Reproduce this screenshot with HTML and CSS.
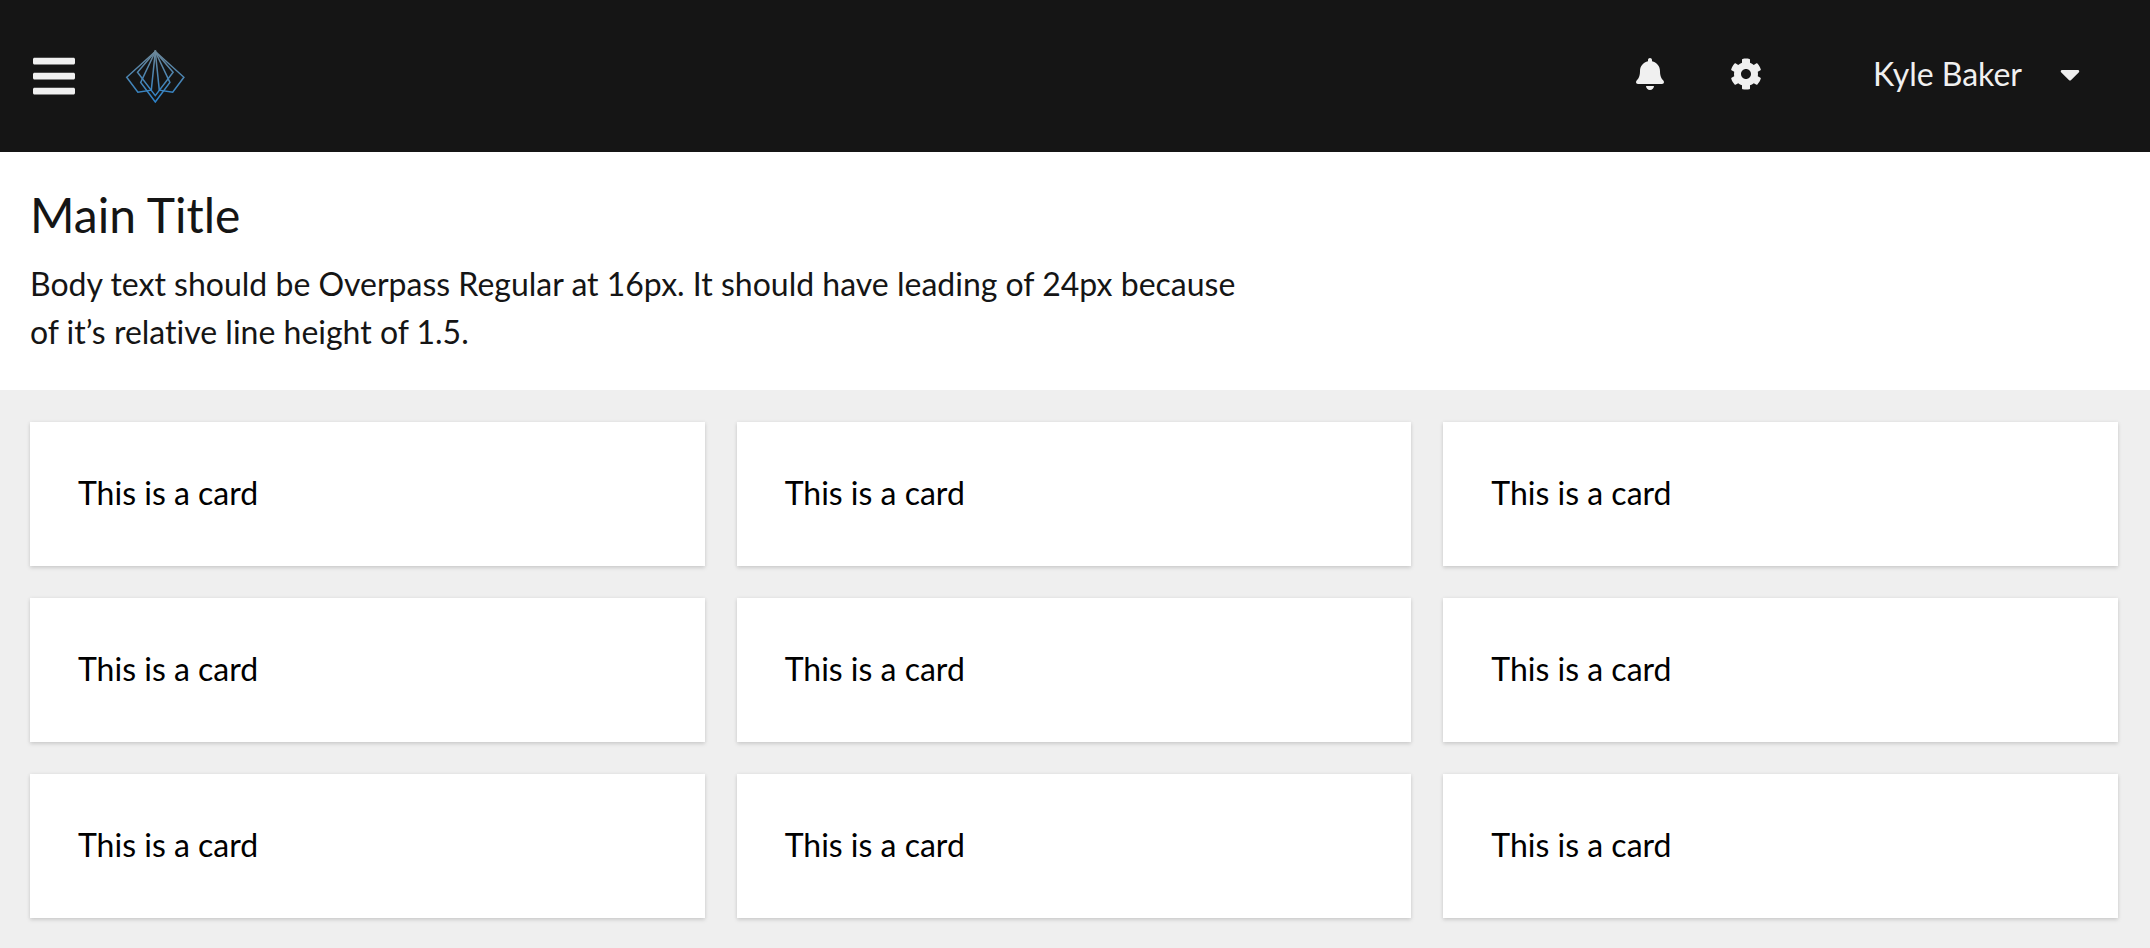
FILE: index.html
```html
<!DOCTYPE html>
<html lang="en">
<head>
<meta charset="utf-8">
<meta name="viewport" content="width=device-width, initial-scale=1">
<title>Main Title</title>
<link rel="stylesheet" href="styles.css">
</head>
<body>
<div class="page">
  <header class="masthead">
    <div class="brand">
      <button class="icon-button" type="button" aria-label="Global navigation">
        <svg class="icon-bars" viewBox="0 0 448 512" aria-hidden="true"><path d="M16 132h416c8.837 0 16-7.163 16-16V76c0-8.837-7.163-16-16-16H16C7.163 60 0 67.163 0 76v40c0 8.837 7.163 16 16 16zm0 160h416c8.837 0 16-7.163 16-16v-40c0-8.837-7.163-16-16-16H16c-8.837 0-16 7.163-16 16v40c0 8.837 7.163 16 16 16zm0 160h416c8.837 0 16-7.163 16-16v-40c0-8.837-7.163-16-16-16H16c-8.837 0-16 7.163-16 16v40c0 8.837 7.163 16 16 16z"/></svg>
      </button>
      <a class="logo-link" href="#" aria-label="Home">
        <svg class="logo" viewBox="0 0 60 54" aria-hidden="true">
          <defs>
            <linearGradient id="logo-stroke" gradientUnits="userSpaceOnUse" x1="0" y1="0" x2="0" y2="54">
              <stop offset="0" stop-color="#6f8796"/>
              <stop offset="1" stop-color="#2b83cc"/>
            </linearGradient>
          </defs>
          <g class="logo-lines" stroke="url(#logo-stroke)">
            <path d="M30.3 2.5 1.7 28.3 12.9 43.3 26.3 41.2z"/>
            <path d="M30.3 2.5 58.9 28.3 47.7 43.3 34.3 41.2z"/>
            <path d="M30.3 2.5 12.5 23.2 30.3 46.6 48.1 23.2z"/>
            <path d="M30.3 2.5 15.7 33.4 30.3 53 44.9 33.4z"/>
          </g>
        </svg>
      </a>
    </div>
    <div class="tools">
      <button class="icon-button" type="button" aria-label="Notifications">
        <svg class="icon-bell" viewBox="0 0 448 512" aria-hidden="true"><path d="M224 512c35.32 0 63.97-28.65 63.97-64H160.03c0 35.35 28.65 64 63.97 64zm215.39-149.71c-19.32-20.76-55.47-51.99-55.47-154.29 0-77.7-54.48-139.9-127.94-155.16V32c0-17.67-14.32-32-31.98-32s-31.98 14.32-31.98 32v20.84C118.56 68.1 64.08 130.3 64.08 208c0 102.3-36.15 133.53-55.47 154.29-6 6.45-8.66 14.16-8.61 21.71.11 16.4 12.98 32 32.1 32h383.8c19.12 0 32-15.6 32.1-32 .05-7.55-2.61-15.27-8.61-21.71z"/></svg>
      </button>
      <button class="icon-button" type="button" aria-label="Settings">
        <svg class="icon-cog" viewBox="0 0 512 512" aria-hidden="true"><path d="M487.4 315.7l-42.6-24.6c4.3-23.2 4.3-47 0-70.2l42.6-24.6c4.9-2.8 7.1-8.6 5.5-14-11.1-35.6-30-67.8-54.7-94.6-3.8-4.1-10-5.1-14.8-2.3L380.8 110c-17.9-15.4-38.5-27.3-60.8-35.1V25.8c0-5.6-3.9-10.5-9.4-11.7-36.7-8.2-74.3-7.8-109.2 0-5.5 1.2-9.4 6.1-9.4 11.7V75c-22.2 7.9-42.8 19.8-60.8 35.1L88.7 85.5c-4.9-2.8-11-1.9-14.8 2.3-24.7 26.7-43.6 58.9-54.7 94.6-1.7 5.4.6 11.2 5.5 14L67.3 221c-4.3 23.2-4.3 47 0 70.2l-42.6 24.6c-4.9 2.8-7.1 8.6-5.5 14 11.1 35.6 30 67.8 54.7 94.6 3.8 4.1 10 5.1 14.8 2.3l42.6-24.6c17.9 15.4 38.5 27.3 60.8 35.1v49.2c0 5.6 3.9 10.5 9.4 11.7 36.7 8.2 74.3 7.8 109.2 0 5.5-1.2 9.4-6.1 9.4-11.7v-49.2c22.2-7.9 42.8-19.8 60.8-35.1l42.6 24.6c4.9 2.8 11 1.9 14.8-2.3 24.7-26.7 43.6-58.9 54.7-94.6 1.5-5.5-.7-11.3-5.6-14.1zM256 336c-44.1 0-80-35.9-80-80s35.9-80 80-80 80 35.9 80 80-35.9 80-80 80z"/></svg>
      </button>
      <button class="user-toggle" type="button" aria-haspopup="menu">
        <span>Kyle Baker</span>
        <svg class="icon-caret" viewBox="0 0 320 512" aria-hidden="true"><path d="M31.3 192h257.3c17.8 0 26.7 21.5 14.1 34.1L174.1 354.7c-7.8 7.8-20.5 7.8-28.3 0L17.2 226.1C4.6 213.5 13.5 192 31.3 192z"/></svg>
      </button>
    </div>
  </header>
  <main>
    <section class="intro">
      <h1 class="title">Main Title</h1>
      <p class="lead">Body text should be Overpass Regular at 16px. It should have leading of 24px because of it’s relative line height of 1.5.</p>
    </section>
    <section class="gallery">
      <article class="card">This is a card</article>
      <article class="card">This is a card</article>
      <article class="card">This is a card</article>
      <article class="card">This is a card</article>
      <article class="card">This is a card</article>
      <article class="card">This is a card</article>
      <article class="card">This is a card</article>
      <article class="card">This is a card</article>
      <article class="card">This is a card</article>
    </section>
  </main>
</div>
</body>
</html>
```
FILE: styles.css
```css
* { box-sizing: border-box; }

body {
  margin: 0;
  background: #efefef;
  color: #151515;
  font-family: Lato, "Open Sans", sans-serif;
  font-size: 32px;
  font-variant-ligatures: none;
  line-height: 48px;
}

button {
  padding: 0;
  border: 0;
  background: none;
  color: inherit;
  font: inherit;
  cursor: pointer;
}

svg { display: block; fill: currentColor; }

.masthead {
  display: flex;
  align-items: center;
  justify-content: space-between;
  min-height: 152px;
  padding: 0 70px 0 33px;
  background: #151515;
  color: #f0f0f0;
}

.brand { display: flex; align-items: center; gap: 50px; }
.icon-bars { width: 42px; height: 48px; }
.logo { width: 60px; height: 54px; }
.logo-lines { fill: none; stroke-width: 1.5; }

.tools { display: flex; align-items: center; padding-bottom: 4px; }
.tools .icon-button { display: grid; place-items: center; width: 96px; height: 64px; }
.icon-bell { width: 28px; height: 32px; }
.icon-cog { width: 32px; height: 32px; }
.user-toggle { display: flex; align-items: center; gap: 38px; margin-left: 79px; }
.icon-caret { width: 20px; height: 32px; }

.intro { padding: 32px 32px 34px 30px; background: #fff; }
.title { margin: 0 0 14px; font-size: 48px; font-weight: 400; line-height: 62px; }
.lead { max-width: 1232px; margin: 0; }

.gallery {
  display: grid;
  grid-template-columns: repeat(3, 1fr);
  gap: 32px;
  padding: 32px 32px 30px 30px;
}

.card {
  padding: 47px 48px 49px;
  background: #fff;
  color: #000;
  box-shadow: 0 2px 4px rgba(3, 3, 3, 0.13), 0 0 4px rgba(3, 3, 3, 0.06);
}
```
